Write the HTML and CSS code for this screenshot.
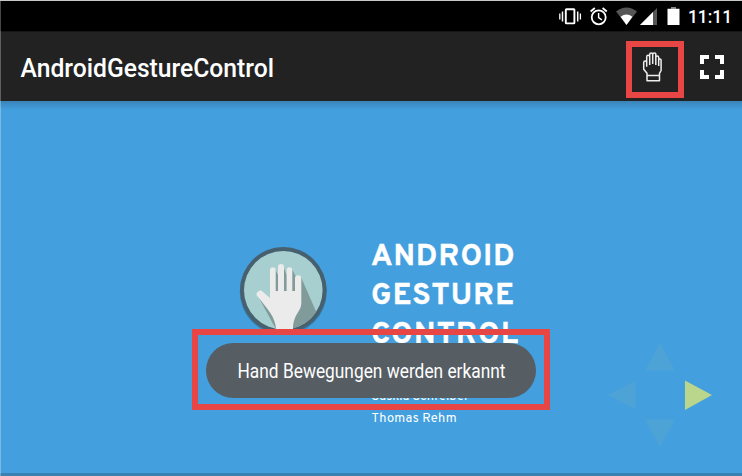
FILE: index.html
```html
<!DOCTYPE html>
<html lang="de">
<head>
<meta charset="utf-8">
<title>AndroidGestureControl</title>
<link rel="stylesheet" href="styles.css">
</head>
<body>
<div class="screen">
  <div class="status-bar">
    <svg class="status-icons" width="130" height="30" viewBox="552 1 130 30">
      <g fill="none" stroke="#fff">
        <rect x="565.8" y="9.2" width="8.6" height="14.2" rx=".6" stroke-width="1.9"/>
        <path d="M562.5 11.5v10M577.7 11.5v10" stroke-width="1.5"/>
        <path d="M559.8 13.5v6M580.4 13.5v6" stroke-width="1.3"/>
        <circle cx="598.7" cy="17.3" r="7" stroke-width="1.8"/>
        <path d="M598.6 13v4.700l3.300 2.200" stroke-width="1.4"/>
        <path d="M590.6 11.500l4.200-3.500M606.800 11.500l-4.200-3.500" stroke-width="1.8"/>
      </g>
      <path d="M616 11.500Q626.500 3.500 637 11.500L626.500 25z" fill="#555"/>
      <path d="M620.600 16.800Q626.500 12.300 632.400 16.800L626.500 25z" fill="#fff"/>
      <path d="M657 8v17h-17z" fill="#555"/>
      <path d="M653 12v13h-13z" fill="#fff"/>
      <path d="M671 7.200h5v1.600h3.500V25h-12V8.800h3.500z" fill="#fff"/>
      <path d="M671 7.200h5v1.600h-5z" fill="#777"/>
    </svg>
    <svg class="clock" width="46" height="30"><text x="0" y="22.300" textLength="44" lengthAdjust="spacingAndGlyphs">11:11</text></svg>
  </div>
  <header class="app-bar">
    <svg class="title" width="260" height="40"><text x="0.500" y="28.500" textLength="253.500" lengthAdjust="spacingAndGlyphs">AndroidGestureControl</text></svg>
    <div class="hand-button">
      <svg width="46" height="45" viewBox="632 47 46 45" fill="none" stroke="#eee" stroke-width="1.5" stroke-linejoin="round">
        <path d="M647 75.500h12.500v5.200H647zM647 75.500v-2.200l-3.300-4.100v-6.500q0-1.600 1.500-1.600t1.500 1.600v4M646.700 66V57q0-1.700 1.400-1.700t1.600 1.500V65M649.700 63.500V54.500q0-1.600 1.500-1.600t1.500 1.600V64M652.700 54.500q0-1.600 1.600-1.600t1.500 1.600V65M655.800 57.500q0-1.600 1.400-1.600t1.500 1.600V66M658.700 60.200q0-1.100 1.200-1.100t1.200 1.100v10.300l-1.600 2.800v2.200"/>
      </svg>
    </div>
    <svg class="fullscreen" width="24" height="24" fill="none" stroke="#fff" stroke-width="4"><path d="M2 9V2h7M15 2h7v7M22 15v7h-7M9 22H2v-7"/></svg>
  </header>
  <main class="content">
    <svg class="logo" width="92" height="94" viewBox="237 244 92 94">
      <defs><clipPath id="disc"><circle cx="283.300" cy="290.300" r="39.500"/></clipPath></defs>
      <circle cx="283.300" cy="291.500" r="43.500" fill="#397fab"/>
      <circle cx="283.300" cy="290.300" r="43.300" fill="#46606f"/>
      <circle cx="283.300" cy="290.300" r="39.300" fill="#a7cfcf"/>
      <g clip-path="url(#disc)" fill="#819b9b">
        <path d="M301 277L318 316 300 340H285zM292 269l5 10v14h-6zM283 266l5 12v15h-6zM275 269l4 8v16h-5zM259 298l19 35 5-5-14-26z"/>
      </g>
      <path d="M276 329C275.500 317 267.500 309 258 297A3.500 3.500 0 0 1 262.500 291.500L270 298V270A2.850 2.850 0 0 1 275.700 270V291H278V267A3 3 0 0 1 284 267V291H286.600V270A2.850 2.850 0 0 1 292.300 270V291H295V278.500A2.900 2.900 0 0 1 301.300 278.500V303C301.300 312 293 314 293 329V334Q285 335 276 334z" fill="#ebebeb"/>
    </svg>
    <div class="intro">
      <svg class="heading" width="160" height="120">
        <text x="-1" y="27" textLength="143.500">ANDROID</text>
        <text x="-1" y="66" textLength="143">GESTURE</text>
        <text x="-1" y="104.500" textLength="147">CONTROL</text>
      </svg>
      <svg class="authors" width="160" height="70">
        <text x="-.5" y="42" textLength="97.500">Saskia Schreiber</text>
        <text x="-.5" y="63.500" textLength="85">Thomas Rehm</text>
      </svg>
    </div>
    <svg class="arrows" width="106" height="106" viewBox="607 342 106 106">
      <path d="M660 343l15 27.500h-30zM608 395l27.500-14.500v29zM660 447l15-27.500h-30z" fill="#4ea3d6"/>
      <path d="M685 380.500l27 14.500-27 15z" fill="#b9d68c"/>
    </svg>
  </main>
  <div class="toast-frame">
    <div class="toast"><svg width="270" height="40"><text x="1.500" y="27" textLength="268" lengthAdjust="spacingAndGlyphs">Hand Bewegungen werden erkannt</text></svg></div>
  </div>
</div>
</body>
</html>
```
FILE: styles.css
```css
body { margin: 0; font-family: Roboto, sans-serif; }
svg { display: block; flex: none; overflow: visible; }
text { fill: #fff; }
.screen {
  position: relative;
  display: flex;
  flex-direction: column;
  box-sizing: border-box;
  width: 742px;
  height: 476px;
  overflow: hidden;
  border-top: 1px solid #c5c9c9;
  background: #439fde;
}
.screen::after {
  content: "";
  position: absolute;
  inset: 0 auto 0 0;
  width: 1px;
  background: rgba(255, 255, 255, .28);
}
.status-bar {
  display: flex;
  justify-content: flex-end;
  height: 30px;
  padding-right: 8px;
  background: #000;
  border-bottom: 1px solid #161616;
}
.clock { margin-left: 6px; }
.clock text { font-size: 17.500px; font-weight: 500; }
.app-bar {
  display: flex;
  box-sizing: border-box;
  height: 69px;
  padding: 9px 18px 0 20px;
  background: #222;
}
.title { margin-top: 7px; }
.title text { font-size: 25px; font-weight: 500; }
.hand-button {
  box-sizing: border-box;
  width: 58px;
  height: 57px;
  margin-left: auto;
  border: 6px solid #e84545;
}
.fullscreen { margin: 14px 0 0 16px; }
.content {
  display: flex;
  box-sizing: border-box;
  height: 372px;
  padding: 137px 29px 0 237px;
  background: linear-gradient(#3984b8, #439fde 9px);
}
.logo { margin-top: 6px; }
.intro { margin-left: 43px; }
.heading text { font: 700 30px Overpass, Roboto, sans-serif; stroke: #fff; stroke-width: .4px; }
.authors text { font: 400 12.800px Overpass, Roboto, sans-serif; }
.arrows { margin: 104px 0 0 auto; }
.screen::before {
  content: "";
  position: absolute;
  inset: auto 0 0;
  height: 3px;
  background: #3981b2;
}
.toast-frame {
  position: absolute;
  left: 192px;
  top: 328px;
  box-sizing: border-box;
  width: 358px;
  height: 81px;
  padding: 8px;
  border: 6px solid #e84545;
}
.toast {
  display: flex;
  justify-content: center;
  align-items: center;
  height: 55px;
  border-radius: 28px;
  background: #565d63;
}
.toast text { font-size: 20px; }
```
